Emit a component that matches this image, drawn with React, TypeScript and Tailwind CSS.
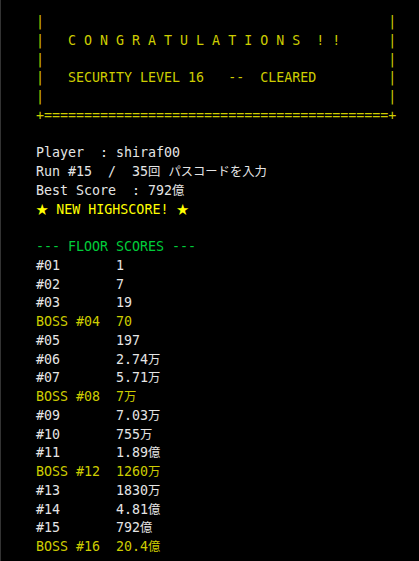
import React from "react";

// terminal-ish result screen, everything on an 8px character grid
const boxLines = [
  "|".padEnd(44) + "|",
  "|   C O N G R A T U L A T I O N S  ! !".padEnd(44) + "|",
  "|".padEnd(44) + "|",
  "|   SECURITY LEVEL 16   --  CLEARED".padEnd(44) + "|",
  "|".padEnd(44) + "|",
  "+" + "=".repeat(43) + "+",
];

const floors = [
  { label: "#01", score: "1", unit: "" },
  { label: "#02", score: "7", unit: "" },
  { label: "#03", score: "19", unit: "" },
  { label: "BOSS #04", score: "70", unit: "", boss: true },
  { label: "#05", score: "197", unit: "" },
  { label: "#06", score: "2.74", unit: "万" },
  { label: "#07", score: "5.71", unit: "万" },
  { label: "BOSS #08", score: "7", unit: "万", boss: true },
  { label: "#09", score: "7.03", unit: "万" },
  { label: "#10", score: "755", unit: "万" },
  { label: "#11", score: "1.89", unit: "億" },
  { label: "BOSS #12", score: "1260", unit: "万", boss: true },
  { label: "#13", score: "1830", unit: "万" },
  { label: "#14", score: "4.81", unit: "億" },
  { label: "#15", score: "792", unit: "億" },
  { label: "BOSS #16", score: "20.4", unit: "億", boss: true },
];

// wide glyphs (kana, kanji, stars) get their own span so they keep the line height
function Wide({ children }: { children: React.ReactNode }) {
  return (
    <span className="font-['Noto_Sans_CJK_JP',sans-serif] text-[12.3px] leading-none">
      {children}
    </span>
  );
}

function Line({ children, className = "" }: { children?: React.ReactNode; className?: string }) {
  return <div className={`h-[18.75px] whitespace-pre ${className}`}>{children ?? " "}</div>;
}

export default function App() {
  return (
    <div className="min-h-screen w-full bg-black border-l border-[#333333] pl-[35px] pt-[13px] font-['DejaVu_Sans_Mono',monospace] text-[13.3px] leading-[18.75px] text-[#e5e5e5]">
      {/* banner box */}
      {boxLines.map((line, i) => (
        <Line key={`box-${i}`} className="text-[#cdcd00]">
          {line}
        </Line>
      ))}

      <Line />

      {/* player info */}
      <Line>Player  : shiraf00</Line>
      <Line>
        Run #15  /  35<Wide>回</Wide> <Wide>パスコードを入力</Wide>
      </Line>
      <Line>
        Best Score  : 792<Wide>億</Wide>
      </Line>
      <Line className="text-[#ffff00]">
        <Wide>★</Wide> NEW HIGHSCORE! <Wide>★</Wide>
      </Line>

      <Line />

      <Line className="text-[#00cd3a]">--- FLOOR SCORES ---</Line>
      {floors.map((f) => (
        <Line key={f.label} className={f.boss ? "text-[#cdcd00]" : ""}>
          {f.label.padEnd(10)}
          {f.score}
          {f.unit && <Wide>{f.unit}</Wide>}
        </Line>
      ))}
    </div>
  );
}
